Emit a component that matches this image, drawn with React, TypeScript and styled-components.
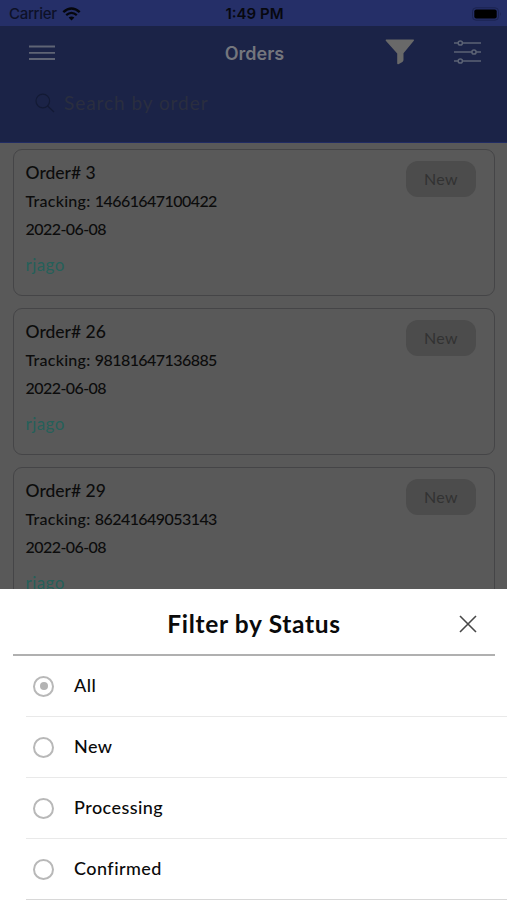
import React from 'react';
import styled, { createGlobalStyle } from 'styled-components';

const GlobalStyle = createGlobalStyle`
  * { box-sizing: border-box; }
  body { margin: 0; background: #595959; }
`;

const Screen = styled.div`
  width: 507px;
  height: 900px;
  display: flex;
  flex-direction: column;
  overflow: hidden;
  background: #595959;
  color: #0c0c0c;
  font-family: Lato, "Open Sans", sans-serif;
`;

const StatusBar = styled.div`
  height: 26px;
  flex: none;
  display: grid;
  grid-template-columns: 1fr auto 1fr;
  align-items: center;
  padding: 1px 7px 0 9px;
  background: #252f68;
  color: #07080f;
  font: 500 15px/24px Inter, sans-serif;
`;

const Carrier = styled.div`
  display: flex;
  align-items: center;
  gap: 5px;
  color: #0d1127;
  letter-spacing: -0.3px;
`;

const Time = styled.div`
  font-weight: 600;
`;

const Battery = styled.svg`
  justify-self: end;
  margin-right: -2px;
`;

const Header = styled.header`
  height: 117px;
  flex: none;
  background: #1b2347;
  border-bottom: 1px solid #202b63;
`;

const NavBar = styled.div`
  height: 51px;
  display: grid;
  grid-template-columns: 1fr auto 1fr;
  align-items: center;
  padding: 0 26px 0 28px;
`;

const PageTitle = styled.h1`
  margin: 5px 0 0;
  color: #74767d;
  font: 600 18px/24px Inter, sans-serif;
`;

const NavActions = styled.div`
  display: flex;
  justify-content: flex-end;
  align-items: center;
  gap: 39px;
`;

const SearchField = styled.div`
  display: flex;
  align-items: center;
  gap: 9px;
  height: 51px;
  padding-left: 35px;
  color: #2a2e3f;
  font-size: 19px;
  letter-spacing: 0.95px;
`;

const OrderList = styled.main`
  height: 446px;
  flex: none;
  overflow: hidden;
  display: flex;
  flex-direction: column;
  gap: 12px;
  padding: 6px 12px 0 13px;
`;

const Card = styled.article`
  height: 147px;
  flex: none;
  display: flex;
  justify-content: space-between;
  align-items: flex-start;
  padding: 11px 18px 0 11.5px;
  border: 1.5px solid #454547;
  border-radius: 9px;
`;

const Details = styled.div`
  font-size: 16px;
  font-weight: 500;
  line-height: 28px;
`;

const OrderName = styled.div`
  font-size: 17.5px;
  line-height: 24px;
  margin-bottom: 2px;
`;

const Line = styled.div`
  letter-spacing: 0.26px;
`;

const Digits = styled.span`
  letter-spacing: -0.56px;
`;

const Customer = styled.div`
  margin-top: 8px;
  color: #256059;
  font-size: 17px;
  font-weight: 400;
  letter-spacing: 0.45px;
`;

const Badge = styled.span`
  width: 70px;
  height: 36px;
  border-radius: 12px;
  background: #4c4c4c;
  color: #323232;
  font-size: 16px;
  line-height: 35px;
  letter-spacing: 0.3px;
  text-align: center;
`;

const Sheet = styled.section`
  height: 311px;
  flex: none;
  background: #fff;
  color: #0a0a0a;
`;

const SheetHeader = styled.div`
  height: 67px;
  margin: 0 12px 0 13px;
  display: grid;
  grid-template-columns: 1fr auto 1fr;
  align-items: center;
  border-bottom: 2px solid #b0b0b0;
`;

const SheetTitle = styled.h2`
  grid-column: 2;
  margin: 5px 0 0;
  font-size: 24.5px;
  font-weight: 700;
  line-height: 32px;
  letter-spacing: 0.68px;
`;

const CloseIcon = styled.svg`
  justify-self: end;
  margin: 4px 18px 0 0;
`;

const Option = styled.div`
  height: 61px;
  margin-left: 26px;
  padding-left: 7px;
  display: flex;
  align-items: center;
  gap: 20px;
  border-bottom: 1px solid #e9e9e9;
  font-size: 18px;
  font-weight: 500;
  letter-spacing: 0.45px;

  &:last-child { border-bottom-color: #d8d8d8; }
`;

const OptionLabel = styled.span`
  margin-bottom: 2px;
`;

const Radio = styled.span<{ $checked: boolean }>`
  width: 21px;
  height: 21px;
  display: grid;
  place-items: center;
  border: 2px solid #b8b8b8;
  border-radius: 50%;

  &::after {
    content: "";
    width: 8px;
    height: 8px;
    border-radius: 50%;
    background: ${(p) => (p.$checked ? '#b4b4b4' : 'transparent')};
  }
`;

const orders = [
  { id: 3, tracking: '14661647100422' },
  { id: 26, tracking: '98181647136885' },
  { id: 29, tracking: '86241649053143' },
];

const statuses = ['All', 'New', 'Processing', 'Confirmed'];

export default function App() {
  return (
    <>
      <GlobalStyle />
      <Screen>
        <StatusBar>
          <Carrier>
            Carrier
            <svg width="19" height="14" viewBox="0 0 19 14" fill="none" stroke="#05060c">
              <path d="M1.3 5.1Q9.5-2.2 17.7 5.1" strokeWidth="2.5" />
              <path d="M4.2 8.2Q9.5 3.6 14.8 8.2" strokeWidth="2.3" />
              <path d="M6.6 10.6Q9.5 8.2 12.4 10.6L9.5 13.6Z" fill="#05060c" stroke="none" />
            </svg>
          </Carrier>
          <Time>1:49 PM</Time>
          <Battery width="30" height="14" viewBox="0 0 30 14">
            <rect x="0.5" y="0.8" width="26" height="12.4" rx="3.5" fill="none" stroke="#1b2350" />
            <rect x="2.3" y="2.4" width="22.4" height="9.2" rx="2" fill="#000" />
            <path d="M28 5Q29.5 7 28 9Z" fill="#1b2350" />
          </Battery>
        </StatusBar>
        <Header>
          <NavBar>
            <svg width="28" height="16" viewBox="0 0 28 16" stroke="#5f6475" strokeWidth="1.8">
              <path d="M1 2.5H27M1 8.8H27M1 15H27" />
            </svg>
            <PageTitle>Orders</PageTitle>
            <NavActions>
              <svg width="30" height="26" viewBox="0 0 30 26" fill="#696969">
                <path d="M1.2 0.5H28.5Q29.4 0.8 28.8 1.7L18.5 14.3V21Q18.4 22.2 17.4 22.9L13.4 25.2Q12.2 25.6 12.2 24.2V14.5L0.8 1.8Q0.1 0.8 1.2 0.5Z" />
              </svg>
              <svg width="27" height="24" viewBox="0 0 27 24" fill="#1b2347" stroke="#5c6375" strokeWidth="1.5">
                <path d="M0 3H27M0 12H27M0 21H27" />
                <circle cx="6.3" cy="3" r="2.1" />
                <circle cx="20" cy="12" r="2.1" />
                <circle cx="6.3" cy="21" r="2.1" />
              </svg>
            </NavActions>
          </NavBar>
          <SearchField>
            <svg width="20" height="20" viewBox="0 0 20 20" fill="none" stroke="#131a34" strokeWidth="1.2">
              <circle cx="7.8" cy="8" r="6.8" />
              <path d="M12.6 13L19 19" />
            </svg>
            Search by order
          </SearchField>
        </Header>
        <OrderList>
          {orders.map((order) => (
            <Card key={order.id}>
              <Details>
                <OrderName>Order# {order.id}</OrderName>
                <Line>Tracking: <Digits>{order.tracking}</Digits></Line>
                <Line><Digits>2022-06-08</Digits></Line>
                <Customer>rjago</Customer>
              </Details>
              <Badge>New</Badge>
            </Card>
          ))}
        </OrderList>
        <Sheet>
          <SheetHeader>
            <SheetTitle>Filter by Status</SheetTitle>
            <CloseIcon width="18" height="18" viewBox="0 0 18 18" stroke="#484848" strokeWidth="1.6">
              <path d="M1 1L17 17M17 1L1 17" />
            </CloseIcon>
          </SheetHeader>
          {statuses.map((status) => (
            <Option key={status}>
              <Radio $checked={status === 'All'} />
              <OptionLabel>{status}</OptionLabel>
            </Option>
          ))}
        </Sheet>
      </Screen>
    </>
  );
}
